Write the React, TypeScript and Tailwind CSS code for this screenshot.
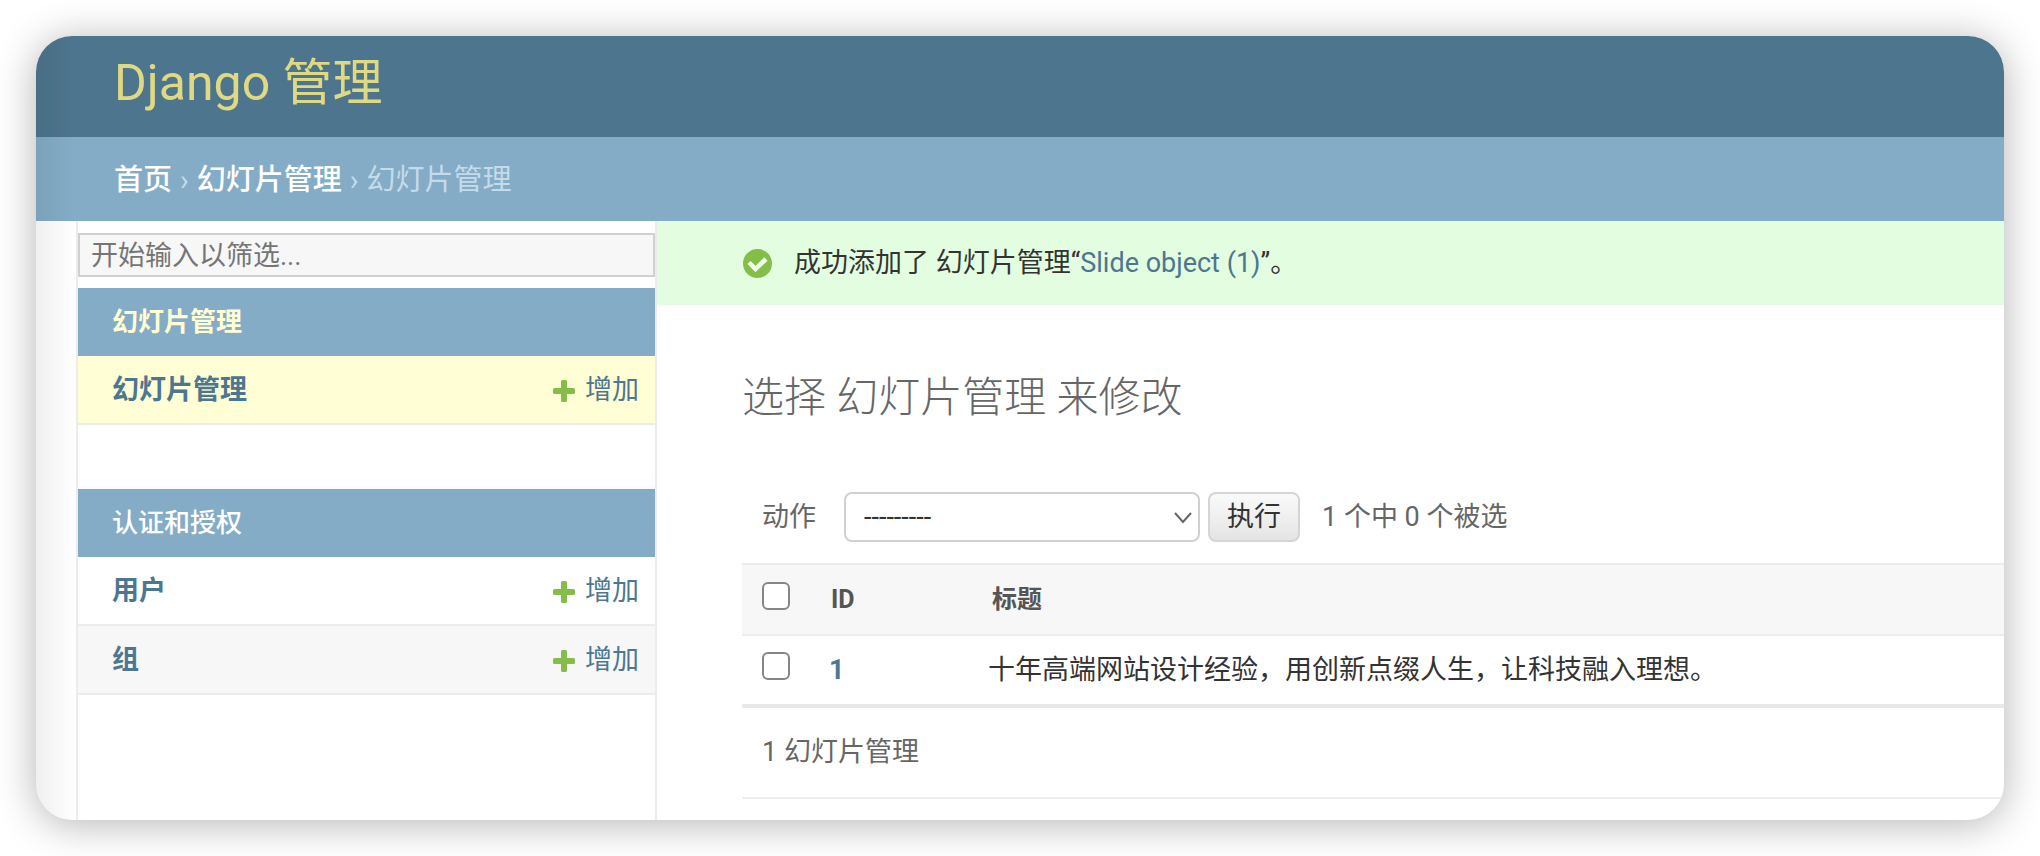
import { useState } from 'react';
import type { ReactNode } from 'react';

type Model = {
  name: string;
  rowClass: string;
};

const slideModels: Model[] = [{ name: '幻灯片管理', rowClass: 'bg-[#fffed4]' }];

const authModels: Model[] = [
  { name: '用户', rowClass: 'bg-white' },
  { name: '组', rowClass: 'bg-[#f7f7f7]' },
];

const slides = [
  { id: 1, title: '十年高端网站设计经验，用创新点缀人生，让科技融入理想。' },
];

function AddIcon() {
  return (
    <svg className="size-[22px]" viewBox="0 0 22 22" aria-hidden="true">
      <path
        fill="#86bd4a"
        d="M9.5 0h3a1.5 1.5 0 0 1 1.5 1.5V8h6.5A1.5 1.5 0 0 1 22 9.500v3a1.500 1.500 0 0 1-1.500 1.500H14v6.500a1.500 1.500 0 0 1-1.500 1.500h-3A1.500 1.500 0 0 1 8 20.500V14H1.500A1.500 1.500 0 0 1 0 12.500v-3A1.500 1.500 0 0 1 1.500 8H8V1.500A1.500 1.500 0 0 1 9.500 0z"
      />
    </svg>
  );
}

function SuccessIcon() {
  return (
    <svg className="size-[29px] shrink-0" viewBox="0 0 29 29" aria-hidden="true">
      <circle cx="14.5" cy="14.5" r="14.5" fill="#83be49" />
      <path d="M6 13.500l6.500 6.500L23 10" fill="none" stroke="#f0fde8" strokeWidth="4.500" />
    </svg>
  );
}

function AppModule({ title, models }: { title: ReactNode; models: Model[] }) {
  return (
    <section className="mb-16 last:mb-0">
      <h2 className="flex h-[68px] items-center bg-[#84acc6] px-[34px] text-[26px] text-white">
        {title}
      </h2>
      <ul>
        {models.map((model) => (
          <li
            key={model.name}
            className={`flex h-[69px] items-center justify-between border-b-2 border-[#ececec] pt-[2px] pr-4 pl-[34px] text-[27px] text-[#4d7690] ${model.rowClass}`}
          >
            <a href="#" className="font-bold">
              {model.name}
            </a>
            <a href="#" className="flex items-center gap-[10px]">
              <AddIcon />
              增加
            </a>
          </li>
        ))}
      </ul>
    </section>
  );
}

function Checkbox({ label, checked, onChange }: { label: string; checked: boolean; onChange: () => void }) {
  return (
    <input
      type="checkbox"
      aria-label={label}
      checked={checked}
      onChange={onChange}
      className="block size-7 appearance-none rounded-md border-2 border-[#858585] bg-white checked:bg-[#84acc6]"
    />
  );
}

export default function App() {
  const [selected, setSelected] = useState<number[]>([]);

  const toggle = (id: number) => {
    setSelected((ids) => (ids.includes(id) ? ids.filter((i) => i !== id) : [...ids, id]));
  };

  const allSelected = selected.length === slides.length;

  return (
    <div className="flex min-h-screen bg-white p-9 font-[Roboto,'Noto_Sans_CJK_SC',sans-serif] leading-none">
      <div className="relative flex min-w-0 flex-1 flex-col overflow-hidden rounded-[36px] bg-white shadow-[0_4px_40px_rgba(0,0,0,0.3)]">
        <header className="flex h-[101px] items-center bg-[#4d758e] px-[78px] pb-2">
          <h1 className="text-[50px] font-normal text-[#e0d983]">
            <a href="#">Django 管理</a>
          </h1>
        </header>

        <nav
          aria-label="面包屑"
          className="flex h-[84px] items-center gap-2 bg-[#84acc6] px-[78px] pt-[2px] text-[29px] text-[#c4dcea]"
        >
          <a href="#" className="font-medium text-white">
            首页
          </a>
          <span>›</span>
          <a href="#" className="font-medium text-white">
            幻灯片管理
          </a>
          <span>›</span>
          <span>幻灯片管理</span>
        </nav>

        <div className="flex flex-1">
          <aside className="ml-10 w-[581px] shrink-0 border-x-2 border-[#ececec] pt-3">
            <input
              type="text"
              aria-label="筛选导航项目"
              placeholder="开始输入以筛选..."
              className="mb-[11px] block h-11 w-full border-2 border-[#d0d0d0] bg-[#f7f7f7] px-[11px] pt-[2px] text-[27px] text-[#333] placeholder:text-[#757575]"
            />
            <AppModule
              title={
                <a href="#" className="font-bold text-[#ffffd2]">
                  幻灯片管理
                </a>
              }
              models={slideModels}
            />
            <AppModule
              title={
                <a href="#" className="font-medium">
                  认证和授权
                </a>
              }
              models={authModels}
            />
          </aside>

          <main className="min-w-0 flex-1">
            <p className="flex h-[84px] items-center gap-[22px] bg-[#e2fddf] px-[86px] text-[27px] text-[#333]">
              <SuccessIcon />
              <span>
                成功添加了 幻灯片管理“
                <a href="#" className="text-[#4d7690]">
                  Slide object (1)
                </a>
                ”。
              </span>
            </p>

            <div className="pl-[85px]">
              <h2 className="pt-[72px] text-[42px] font-light text-[#666]">选择 幻灯片管理 来修改</h2>

              <form className="mt-[73px] flex h-[50px] items-center pl-5 text-[27px] text-[#666]">
                <label htmlFor="action" className="mr-7">
                  动作
                </label>
                <div className="relative">
                  <select
                    id="action"
                    className="block h-[50px] w-[356px] appearance-none rounded-lg border-2 border-[#d0d0d0] bg-white px-[18px] text-[27px] text-[#333]"
                  >
                    <option>---------</option>
                    <option>删除所选的 幻灯片管理</option>
                  </select>
                  <svg
                    className="pointer-events-none absolute top-5 right-2 h-3 w-[18px]"
                    viewBox="0 0 18 12"
                    fill="none"
                    aria-hidden="true"
                  >
                    <path d="M1 1l8 9 8-9" stroke="#666" strokeWidth="2" />
                  </svg>
                </div>
                <button
                  type="button"
                  className="ml-2 h-[50px] w-[92px] rounded-lg border-2 border-[#d5d5d5] bg-linear-to-b from-[#fafafa] to-[#e4e4e4] text-[#333]"
                >
                  执行
                </button>
                <span className="ml-[22px]">
                  {slides.length} 个中 {selected.length} 个被选
                </span>
              </form>

              <table className="mt-[21px] w-full table-fixed text-left">
                <thead>
                  <tr className="h-[71px] border-y-2 border-[#ececec] bg-[#f7f7f7] text-[25px] text-[#555]">
                    <th className="w-[87px] pb-2 pl-5">
                      <Checkbox
                        label="全选"
                        checked={allSelected}
                        onChange={() => setSelected(allSelected ? [] : slides.map((s) => s.id))}
                      />
                    </th>
                    <th className="w-[159px] pl-[2px]">ID</th>
                    <th className="pl-[4px]">标题</th>
                  </tr>
                </thead>
                <tbody>
                  {slides.map((slide) => (
                    <tr key={slide.id} className="h-[71px] border-b-4 border-[#e8e8e8] text-[27px]">
                      <td className="pb-2 pl-5">
                        <Checkbox
                          label={`选择 ${slide.title}`}
                          checked={selected.includes(slide.id)}
                          onChange={() => toggle(slide.id)}
                        />
                      </td>
                      <th>
                        <a href="#" className="text-[#4d7690]">
                          {slide.id}
                        </a>
                      </th>
                      <td className="text-[#333]">{slide.title}</td>
                    </tr>
                  ))}
                </tbody>
              </table>

              <p className="flex h-[91px] items-center border-b-2 border-[#ececec] pl-5 text-[27px] text-[#666]">
                {slides.length} 幻灯片管理
              </p>
            </div>
          </main>
        </div>

        {/* shading along the left edge */}
        <div className="pointer-events-none absolute inset-y-0 left-0 w-10 bg-linear-to-r from-black/6 to-transparent" />
      </div>
    </div>
  );
}
